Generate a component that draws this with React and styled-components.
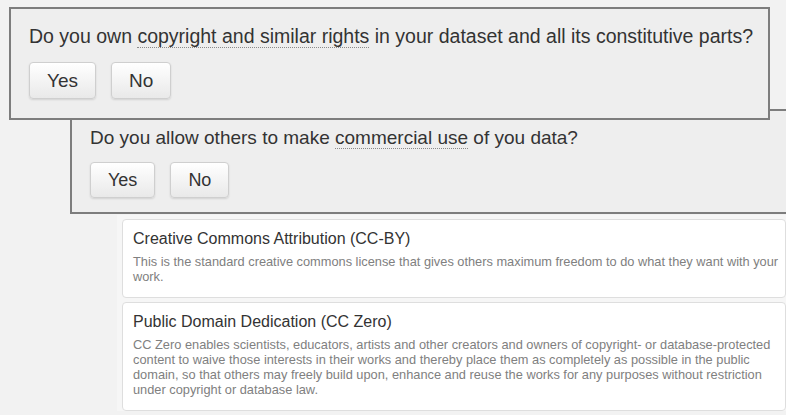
import React from "react";
import styled, { createGlobalStyle } from "styled-components";

const GlobalStyle = createGlobalStyle`
  body {
    margin: 0;
    background: #f2f2f2;
    font-family: "Liberation Sans", Arial, Helvetica, sans-serif;
    color: #333;
    overflow: hidden;
  }
`;

const Page = styled.div`
  padding: 7px 0 0 9px;
  width: 900px;
`;

const Branch = styled.div`
  margin-left: ${(p) => p.$indent || 0}px;
  margin-top: ${(p) => (p.$overlap ? -11 : 0)}px;
`;

const QuestionBox = styled.div`
  position: relative;
  z-index: ${(p) => p.$depth};
  box-sizing: border-box;
  width: 761px;
  background: #eeeeee;
  border: 2px solid #7d7d7d;
  padding: 14px 10px ${(p) => p.$tail}px 18px;
`;

const Prompt = styled.p`
  margin: 0;
  font-size: ${(p) => p.$size}px;
  line-height: 26px;
  color: #333;
`;

const Term = styled.abbr`
  text-decoration: none;
  border-bottom: 1px dotted #8a8a8a;
  cursor: help;
`;

const Choices = styled.div`
  display: flex;
  gap: 15px;
  margin-top: ${(p) => p.$gap}px;
`;

const Choice = styled.button`
  font-family: inherit;
  font-size: ${(p) => p.$size}px;
  line-height: ${(p) => p.$line}px;
  color: #333;
  padding: 5px 17px;
  border: 1px solid #cfcfcf;
  border-radius: 4px;
  background: linear-gradient(#ffffff, #e9e9e9);
  box-shadow: 0 1px 2px rgba(0, 0, 0, 0.12);
  cursor: pointer;
`;

const LicenceList = styled.div`
  margin: 1px 0 0 47px;
  padding: 4px 0 0 5px;
  width: 669px;
  box-sizing: border-box;
  background: #f6f6f6;
  display: flex;
  flex-direction: column;
  gap: 4px;
`;

const LicenceCard = styled.div`
  background: #fff;
  border: 1px solid #dedede;
  border-radius: 4px;
  padding: 10px 6px 13px 10px;
`;

const LicenceTitle = styled.h4`
  margin: 0 0 6px;
  font-size: 16px;
  font-weight: normal;
  line-height: 18px;
  color: #333;
`;

const LicenceText = styled.p`
  margin: 0;
  font-size: 12.8px;
  line-height: 15px;
  color: #808080;
`;

const licences = [
  {
    title: "Creative Commons Attribution (CC-BY)",
    text: "This is the standard creative commons license that gives others maximum freedom to do what they want with your work.",
  },
  {
    title: "Public Domain Dedication (CC Zero)",
    text: "CC Zero enables scientists, educators, artists and other creators and owners of copyright- or database-protected content to waive those interests in their works and thereby place them as completely as possible in the public domain, so that others may freely build upon, enhance and reuse the works for any purposes without restriction under copyright or database law.",
  },
];

function Question({ depth, tail, size, buttonSize, buttonLine, gap, children }) {
  return (
    <QuestionBox $depth={depth} $tail={tail}>
      <Prompt $size={size}>{children}</Prompt>
      <Choices $gap={gap}>
        <Choice $size={buttonSize} $line={buttonLine}>Yes</Choice>
        <Choice $size={buttonSize} $line={buttonLine}>No</Choice>
      </Choices>
    </QuestionBox>
  );
}

export default function App() {
  return (
    <Page>
      <GlobalStyle />
      <Question depth={3} tail={19} size={19.5} buttonSize={19} buttonLine={25} gap={13}>
        Do you own <Term title="copyright and similar rights">copyright and similar rights</Term> in your dataset and all its constitutive parts?
      </Question>
      <Branch $indent={61} $overlap>
        <Question depth={2} tail={14} size={19} buttonSize={18} buttonLine={24} gap={11}>
          Do you allow others to make <Term title="commercial use">commercial use</Term> of you data?
        </Question>
        <LicenceList>
          {licences.map((l) => (
            <LicenceCard key={l.title}>
              <LicenceTitle>{l.title}</LicenceTitle>
              <LicenceText>{l.text}</LicenceText>
            </LicenceCard>
          ))}
        </LicenceList>
      </Branch>
    </Page>
  );
}
